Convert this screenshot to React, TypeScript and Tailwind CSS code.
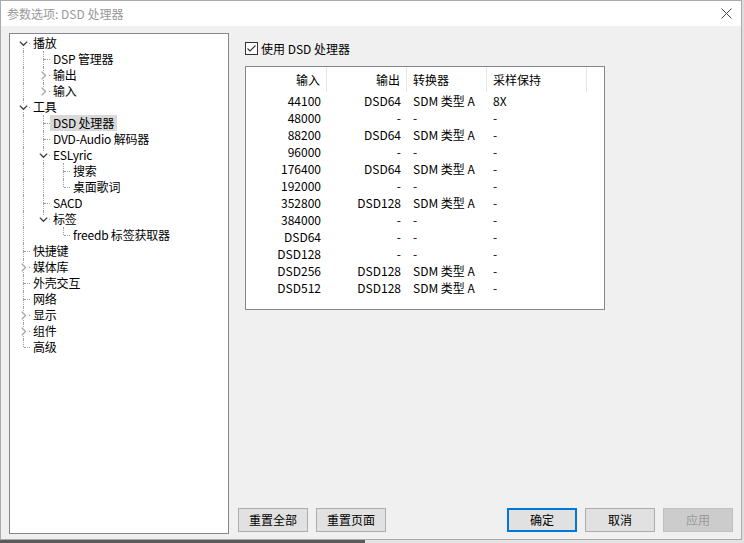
import React from 'react';

type TreeNode = {
  label: string;
  children?: TreeNode[];
  collapsed?: boolean;
  selected?: boolean;
};

const tree: TreeNode[] = [
  {
    label: '播放',
    children: [
      { label: 'DSP 管理器' },
      { label: '输出', collapsed: true },
      { label: '输入', collapsed: true },
    ],
  },
  {
    label: '工具',
    children: [
      { label: 'DSD 处理器', selected: true },
      { label: 'DVD-Audio 解码器' },
      { label: 'ESLyric', children: [{ label: '搜索' }, { label: '桌面歌词' }] },
      { label: 'SACD' },
      { label: '标签', children: [{ label: 'freedb 标签获取器' }] },
    ],
  },
  { label: '快捷键' },
  { label: '媒体库', collapsed: true },
  { label: '外壳交互' },
  { label: '网络' },
  { label: '显示', collapsed: true },
  { label: '组件', collapsed: true },
  { label: '高级' },
];

type FlatRow = {
  node: TreeNode;
  guides: boolean[];
  hasNext: boolean;
  first: boolean;
};

function flatten(nodes: TreeNode[], guides: boolean[], out: FlatRow[]) {
  nodes.forEach((n, i) => {
    const hasNext = i < nodes.length - 1;
    out.push({ node: n, guides, hasNext, first: guides.length === 0 && i === 0 });
    if (n.children) flatten(n.children, [...guides, hasNext], out);
  });
  return out;
}

const rows = flatten(tree, [], []);

const tableRows = [
  ['44100', 'DSD64', 'SDM 类型 A', '8X'],
  ['48000', '-', '-', '-'],
  ['88200', 'DSD64', 'SDM 类型 A', '-'],
  ['96000', '-', '-', '-'],
  ['176400', 'DSD64', 'SDM 类型 A', '-'],
  ['192000', '-', '-', '-'],
  ['352800', 'DSD128', 'SDM 类型 A', '-'],
  ['384000', '-', '-', '-'],
  ['DSD64', '-', '-', '-'],
  ['DSD128', '-', '-', '-'],
  ['DSD256', 'DSD128', 'SDM 类型 A', '-'],
  ['DSD512', 'DSD128', 'SDM 类型 A', '-'],
];

const Chevron = ({ open }: { open: boolean }) => (
  <svg width="9" height="9" viewBox="0 0 9 9">
    {open ? (
      <polyline points="0.8,2.6 4.5,6.3 8.2,2.6" fill="none" stroke="#3c3c3c" strokeWidth="1.3" />
    ) : (
      <polyline points="2.8,0.8 6.5,4.5 2.8,8.2" fill="none" stroke="#a6a6a6" strokeWidth="1.3" />
    )}
  </svg>
);

const TreeRow = ({ row }: { row: FlatRow }) => {
  const { node, guides, hasNext, first } = row;
  const hasExpander = !!node.children || node.collapsed;
  return (
    <div className="flex h-[16px] items-stretch">
      {guides.map((g, i) => (
        <div key={i} className="relative w-[20px]">
          {g && <div className="absolute left-[10px] top-0 h-[16px] border-l border-dotted border-[#a0a0a0]" />}
        </div>
      ))}
      <div className="relative w-[17px]">
        {!first && <div className="absolute left-[10px] top-0 h-[8px] border-l border-dotted border-[#a0a0a0]" />}
        {hasNext && <div className="absolute left-[10px] top-[8px] h-[8px] border-l border-dotted border-[#a0a0a0]" />}
        <div className="absolute left-[11px] top-[8px] w-[6px] border-t border-dotted border-[#a0a0a0]" />
        {hasExpander && (
          <div className="absolute left-[6px] top-[4px] flex h-[9px] w-[9px] items-center justify-center bg-white">
            <Chevron open={!!node.children} />
          </div>
        )}
      </div>
      <span
        className={`whitespace-nowrap px-[3px] leading-[16px] tracking-[-0.2px] ${
          node.selected ? 'bg-[#d9d9d9]' : ''
        }`}
      >
        {node.label}
      </span>
    </div>
  );
};

const Button = ({ label, primary, disabled }: { label: string; primary?: boolean; disabled?: boolean }) => (
  <div
    className={`flex h-[24px] w-[70px] items-center justify-center text-[12px] ${
      primary
        ? 'border-2 border-[#0078d7] bg-[#e1e1e1] text-black'
        : disabled
        ? 'border border-[#bfbfbf] bg-[#cccccc] text-[#9a9a9a]'
        : 'border border-[#adadad] bg-[#e1e1e1] text-black'
    }`}
  >
    {label}
  </div>
);

export default function App() {
  return (
    <div className="flex h-[543px] w-[744px] flex-col overflow-hidden bg-[#e6e6e6] font-['Noto_Sans_CJK_SC',sans-serif] text-[12px] text-black">
      <div className="flex h-[540px]">
        {/* dialog */}
        <div className="flex h-[540px] w-[742px] flex-col border border-[#aaaaaa] bg-[#f0f0f0]">
          <div className="flex h-[25px] items-center justify-between bg-white pl-[6px] pr-[9px]">
            <span className="text-[12px] text-[#999999]">参数选项: DSD 处理器</span>
            <svg width="11" height="11" viewBox="0 0 11 11">
              <path d="M0.5 0.5 L10.5 10.5 M10.5 0.5 L0.5 10.5" stroke="#444" strokeWidth="1" />
            </svg>
          </div>
          <div className="flex flex-1 pl-[8px] pt-[7px]">
            {/* tree */}
            <div className="h-[501px] w-[220px] border border-[#828790] bg-white pl-[3px] pt-[1px]">
              {rows.map((r, i) => (
                <TreeRow key={i} row={r} />
              ))}
            </div>
            {/* page */}
            <div className="ml-[9px] flex h-[501px] w-[495px] flex-col">
              <div className="ml-[7px] mt-[9px] flex h-[13px] items-center gap-[3px]">
                <div className="flex h-[13px] w-[13px] items-center justify-center border border-[#333333] bg-white">
                  <svg width="11" height="11" viewBox="0 0 11 11">
                    <polyline points="1.5,5.5 4,8 9.5,2.5" fill="none" stroke="#333" strokeWidth="1.1" />
                  </svg>
                </div>
                <span className="leading-[16px]">使用 DSD 处理器</span>
              </div>
              <div className="ml-[7px] mt-[11px] h-[244px] w-[360px] border border-[#828790] bg-white">
                <div className="grid h-[25px] grid-cols-[81px_80px_80px_100px] leading-[25px]">
                  <div className="border-r border-[#e5e5e5] pr-[6px] text-right">输入</div>
                  <div className="border-r border-[#e5e5e5] pr-[6px] text-right">输出</div>
                  <div className="border-r border-[#e5e5e5] pl-[6px]">转换器</div>
                  <div className="border-r border-[#e5e5e5] pl-[6px]">采样保持</div>
                </div>
                {tableRows.map((r, i) => (
                  <div key={i} className="grid h-[17px] grid-cols-[81px_80px_80px_100px] leading-[17px]">
                    <div className="pr-[6px] text-right">{r[0]}</div>
                    <div className="pr-[6px] text-right">{r[1]}</div>
                    <div className="pl-[6px]">{r[2]}</div>
                    <div className="pl-[6px]">{r[3]}</div>
                  </div>
                ))}
              </div>
              <div className="mb-[2px] mt-auto flex gap-[8px]">
                <Button label="重置全部" />
                <Button label="重置页面" />
                <div className="flex-1" />
                <Button label="确定" primary />
                <Button label="取消" />
                <Button label="应用" disabled />
              </div>
            </div>
          </div>
        </div>
        <div className="flex-1 bg-[#dedede]" />
      </div>
      <div className="flex h-[3px]">
        <div className="w-[365px] bg-[#5a5a5a]" />
        <div className="flex-1 bg-[#e3e3e3]" />
      </div>
    </div>
  );
}
